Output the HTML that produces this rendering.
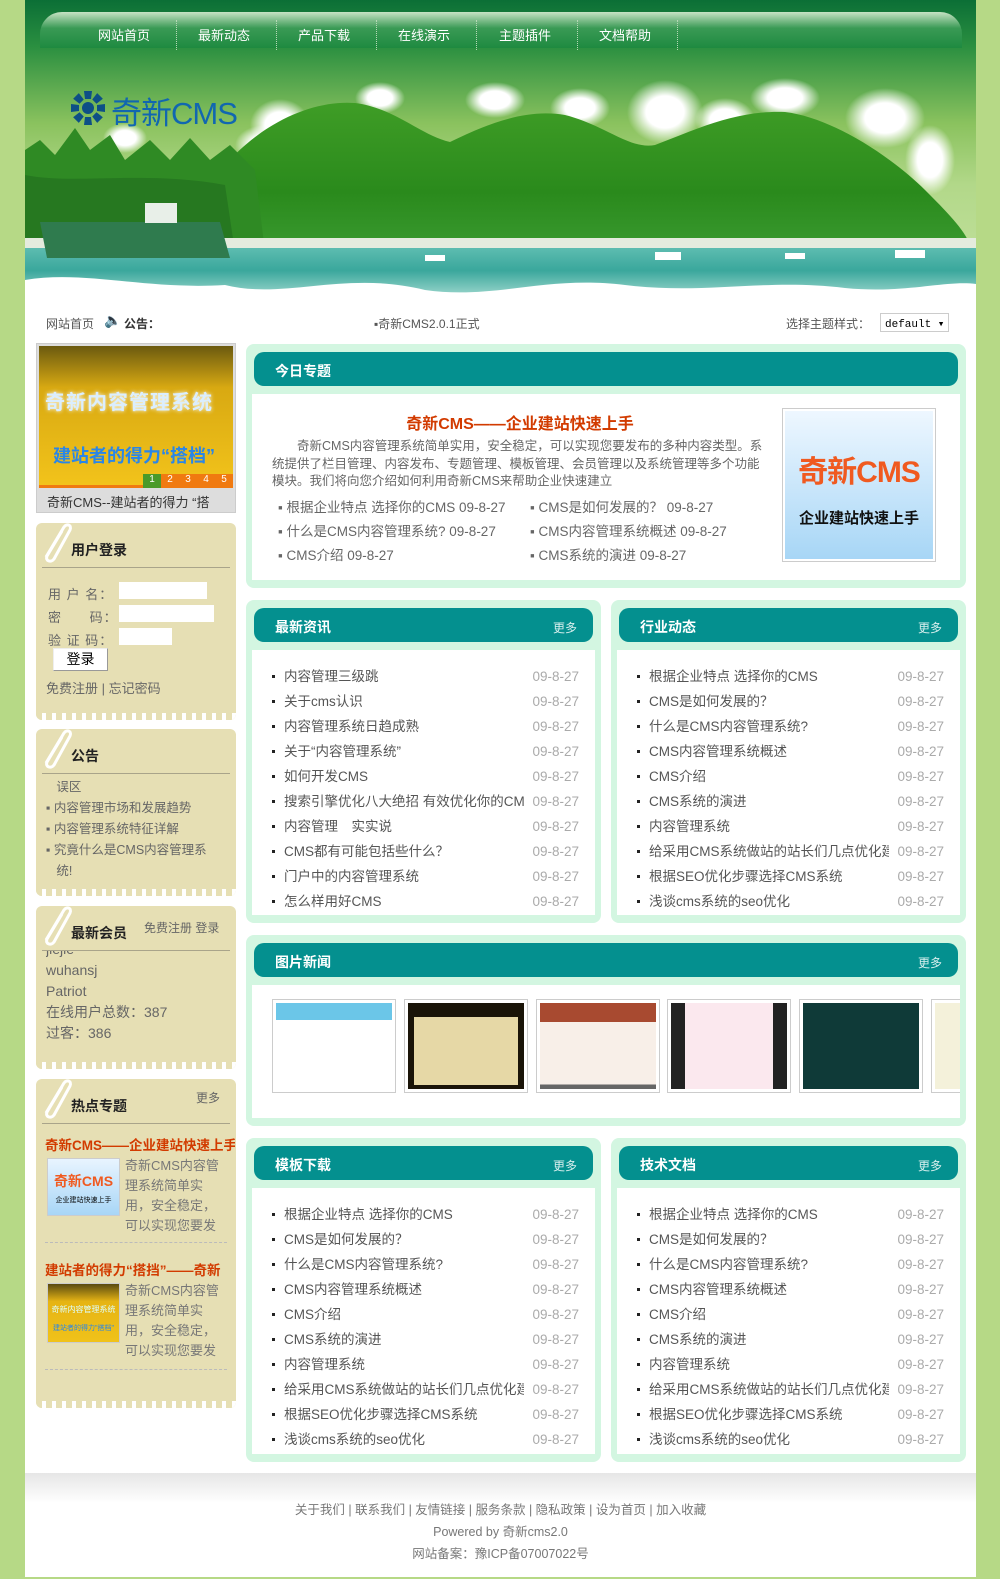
<!DOCTYPE html>
<html><head><meta charset="utf-8">
<style>
*{margin:0;padding:0;box-sizing:border-box}
body{width:1000px;height:1579px;background:#b6d986;font-family:"Liberation Sans","Noto Sans CJK SC",sans-serif;font-size:13px;color:#555;position:relative;overflow:hidden}
.abs{position:absolute}
#wrap{position:absolute;left:25px;top:0;width:951px;height:1577px;background:#fff}
.nav{position:absolute;left:15px;top:12px;width:922px;height:36px;border-radius:22px 22px 0 0;background:linear-gradient(#c7e3c4,#3a9a55 45%,#1e8a40)}
.nav span{position:absolute;top:13px;color:#fff;font-size:13px}
.nav i{position:absolute;top:8px;height:30px;border-left:1px dotted #b5d9b5}
.panel{position:absolute;background:#d3f6e1;border-radius:8px}
.phd{position:absolute;left:8px;right:8px;top:8px;height:34px;background:#04908f;border-radius:10px}
.phd b{position:absolute;left:21px;top:9px;color:#fff;font-size:14px}
.phd em{position:absolute;right:16px;top:11px;color:#d8efee;font-size:12px;font-style:normal}
.pbd{position:absolute;left:6px;right:6px;top:50px;bottom:8px;background:#fff}
.list{position:absolute;left:12px;right:16px;top:14px}
.list div{height:25px;line-height:25px;position:relative;padding-left:20px;font-size:13.5px;color:#555;white-space:nowrap;overflow:hidden}
.list div:before{content:"";position:absolute;left:8px;top:11px;width:3px;height:3px;background:#222}
.list div span{position:absolute;right:0;top:0;background:#fff;color:#aaa;padding-left:8px}
.side{position:absolute;left:36px;width:200px;background:#e6dfb4;border-radius:6px;overflow:hidden}
.side:after{content:"";position:absolute;left:0;right:0;bottom:0;height:7px;background:repeating-linear-gradient(90deg,#e6dfb4 0 6px,#fff 6px 10px);}
.side .t{position:absolute;left:35px;top:17px;font-size:14px;font-weight:bold;color:#222}
.side .hr{position:absolute;left:6px;right:6px;top:44px;border-top:1px solid #a9a48a}
.clip{position:absolute;left:4px;top:0}
</style></head><body>
<div id="wrap">
<svg class="abs" style="left:0;top:0" width="951" height="308" viewBox="0 0 951 308">
<defs>
<linearGradient id="sky" x1="0" y1="0" x2="0" y2="1"><stop offset="0" stop-color="#0b6f36"/><stop offset="0.15" stop-color="#2a8f40"/><stop offset="0.4" stop-color="#8ac25e"/><stop offset="0.6" stop-color="#b2d889"/><stop offset="1" stop-color="#c8e4a4"/></linearGradient>
<linearGradient id="hill" x1="0" y1="0" x2="0" y2="1"><stop offset="0" stop-color="#3f9d26"/><stop offset="0.6" stop-color="#2a8a1c"/><stop offset="1" stop-color="#3a9a30"/></linearGradient>
<linearGradient id="wat" x1="0" y1="0" x2="0" y2="1"><stop offset="0" stop-color="#5dbcb0"/><stop offset="0.5" stop-color="#3aa79c"/><stop offset="1" stop-color="#8fd0c6"/></linearGradient>
<radialGradient id="cl"><stop offset="0.5" stop-color="#fff"/><stop offset="1" stop-color="#fff" stop-opacity="0"/></radialGradient>
</defs>
<rect width="951" height="308" fill="url(#sky)"/>
<g fill="url(#cl)">
<ellipse cx="255" cy="125" rx="30" ry="26"/><ellipse cx="240" cy="145" rx="30" ry="20"/><ellipse cx="355" cy="98" rx="25" ry="16"/><ellipse cx="470" cy="100" rx="30" ry="18"/><ellipse cx="555" cy="108" rx="30" ry="20"/><ellipse cx="640" cy="112" rx="38" ry="32"/><ellipse cx="700" cy="120" rx="30" ry="22"/><ellipse cx="760" cy="98" rx="35" ry="20"/><ellipse cx="860" cy="118" rx="40" ry="30"/><ellipse cx="905" cy="160" rx="25" ry="35"/><ellipse cx="100" cy="138" rx="22" ry="15"/>
</g>
<path d="M190 250 L200 165 C240 120 290 100 330 103 C370 108 395 135 425 142 C460 125 500 108 540 115 C580 125 605 150 630 145 C670 130 710 110 760 112 C810 118 870 160 900 190 C920 210 940 230 945 245 L945 252 L190 252 Z" fill="url(#hill)"/>
<path d="M0 150 L15 140 L30 155 L50 128 L65 150 L85 135 L100 160 L125 140 L145 160 L165 138 L185 160 L205 145 L230 170 L240 252 L0 252 Z" fill="#2f8a24"/>
<path d="M0 175 C50 185 120 170 200 185 L210 252 L0 252Z" fill="#216d1e" opacity="0.6"/>
<rect x="0" y="238" width="951" height="12" fill="#e4ebde"/>
<rect x="0" y="248" width="951" height="45" fill="url(#wat)"/>
<path d="M0 280 C60 270 120 290 200 285 C260 300 320 270 400 290 C470 300 520 275 600 285 C680 295 740 278 820 288 C880 294 920 280 951 284 L951 308 L0 308Z" fill="#fff"/>
<path d="M15 222 L195 222 L205 258 L22 258 Z" fill="#2f7b4e"/><rect x="120" y="203" width="32" height="20" fill="#e8efe8"/>
<g fill="#fff"><rect x="400" y="255" width="20" height="6"/><rect x="630" y="252" width="26" height="8"/><rect x="760" y="253" width="20" height="6"/><rect x="870" y="250" width="30" height="8"/></g>
</svg>
<div class="nav">
<span style="left:58px">网站首页</span><i style="left:136px"></i>
<span style="left:158px">最新动态</span><i style="left:236px"></i>
<span style="left:258px">产品下载</span><i style="left:336px"></i>
<span style="left:358px">在线演示</span><i style="left:436px"></i>
<span style="left:459px">主题插件</span><i style="left:537px"></i>
<span style="left:559px">文档帮助</span><i style="left:637px"></i>
</div>
<svg class="abs" style="left:44px;top:89px" width="38" height="38" viewBox="0 0 38 38"><g fill="#0d4f86" transform="translate(19 19)"><circle r="6"/><path id="s" d="M-4 -17 L4 -17 L3 -9 L-3 -9Z"/><use href="#s" transform="rotate(45)"/><use href="#s" transform="rotate(90)"/><use href="#s" transform="rotate(135)"/><use href="#s" transform="rotate(180)"/><use href="#s" transform="rotate(225)"/><use href="#s" transform="rotate(270)"/><use href="#s" transform="rotate(315)"/></g></svg>
<div class="abs" style="left:86px;top:88px;font-size:31px;color:#1167b0;letter-spacing:-1px">奇新CMS</div>
<div class="abs" style="left:21px;top:315px;font-size:12px;color:#555">网站首页</div>
<div class="abs" style="left:79px;top:312px;font-size:14px;color:#c9a000">🔈</div>
<div class="abs" style="left:99px;top:315px;font-size:12px;color:#333;font-weight:bold">公告：</div>
<div class="abs" style="left:349px;top:315px;font-size:12px;color:#555">▪奇新CMS2.0.1正式</div>
<div class="abs" style="left:761px;top:315px;font-size:12px;color:#555">选择主题样式：</div>
<div class="abs" style="left:855px;top:313px;width:69px;height:19px;border:1px solid #ccc;font-family:'Liberation Mono',monospace;font-size:11px;color:#000;padding:3px 0 0 4px">default ▾</div>

<div class="abs" style="left:0;top:1473px;width:951px;height:30px;background:linear-gradient(#e6e6e6,#fff)"></div>
<div class="abs" style="left:0;top:1499px;width:951px;text-align:center;font-size:12.5px;color:#777;line-height:22px">关于我们 | 联系我们 | 友情链接 | 服务条款 | 隐私政策 | 设为首页 | 加入收藏<br>Powered by 奇新cms2.0<br>网站备案：豫ICP备07007022号</div>
</div>

<!-- slideshow -->
<div class="abs" style="left:36px;top:343px;width:200px;height:170px;background:#ddd;border:1px solid #ccc">
<div class="abs" style="left:2px;top:2px;width:194px;height:142px;background:linear-gradient(#6b5a10,#d8a912 30%,#f2c31b);border-bottom:3px solid #f07a10"></div>
<div class="abs" style="left:8px;top:42px;font-size:20px;color:#dbeefe;font-weight:bold;letter-spacing:1px;white-space:nowrap;text-shadow:0 0 4px #fff">奇新内容管理系统</div>
<div class="abs" style="left:16px;top:98px;font-size:18px;color:#2a86e8;font-weight:bold;white-space:nowrap">建站者的得力“搭档”</div>
<div class="abs" style="left:106px;top:130px;width:90px;height:14px;background:#f07a10;font-size:10px;color:#fff;display:flex"><span style="width:18px;background:#4a9a2a;text-align:center">1</span><span style="width:18px;text-align:center">2</span><span style="width:18px;text-align:center">3</span><span style="width:18px;text-align:center">4</span><span style="width:18px;text-align:center">5</span></div>
<div class="abs" style="left:10px;top:148px;font-size:13px;color:#333;white-space:nowrap;width:185px;overflow:hidden">奇新CMS--建站者的得力 “搭</div>
</div>

<svg width="0" height="0" style="position:absolute"><defs><g id="clip"><path d="M6 34 L24 4 C27 0 32 2 30 7 L14 36 C11 40 5 38 7 33 L22 8" fill="none" stroke="#fff" stroke-width="3"/></g></defs></svg>

<div class="side" style="top:523px;height:197px">
<svg class="clip" width="34" height="42"><use href="#clip"/></svg>
<div class="t">用户登录</div><div class="hr"></div>
<div class="abs" style="left:12px;top:60px;font-size:13px;color:#666;line-height:23px;letter-spacing:1px">用 户 名：<br>密&nbsp;&nbsp;&nbsp;&nbsp;&nbsp;&nbsp;码：<br>验 证 码：</div>
<div class="abs" style="left:83px;top:59px;width:88px;height:17px;background:#fff"></div>
<div class="abs" style="left:83px;top:82px;width:95px;height:17px;background:#fff"></div>
<div class="abs" style="left:83px;top:105px;width:53px;height:17px;background:#fff"></div>
<div class="abs" style="left:17px;top:125px;width:55px;height:23px;background:#fff;border:1px solid #999;border-top-color:#eee;border-left-color:#eee;text-align:center;font-size:14px;color:#000;line-height:21px">登录</div>
<div class="abs" style="left:10px;top:155px;font-size:13px;color:#666">免费注册 | 忘记密码</div>
</div>

<div class="side" style="top:729px;height:167px">
<svg class="clip" width="34" height="42"><use href="#clip"/></svg>
<div class="t">公告</div><div class="hr"></div>
<div class="abs" style="left:10px;top:48px;font-size:12.5px;color:#666;line-height:21px;width:185px">&nbsp;&nbsp;&nbsp;误区<br>▪ 内容管理市场和发展趋势<br>▪ 内容管理系统特征详解<br>▪ 究竟什么是CMS内容管理系<br>&nbsp;&nbsp;&nbsp;统!</div>
</div>

<div class="side" style="top:906px;height:163px">
<svg class="clip" width="34" height="42"><use href="#clip"/></svg>
<div class="t">最新会员</div><div class="abs" style="left:108px;top:13px;font-size:12px;color:#666">免费注册 登录</div><div class="hr"></div>
<div class="abs" style="left:10px;top:45px;height:100px;overflow:hidden;font-size:14px;color:#666;line-height:21px"><div style="margin-top:-12px">jiejie<br>wuhansj<br>Patriot<br>在线用户总数：387<br>过客：386</div></div>
</div>

<div class="side" style="top:1079px;height:329px">
<svg class="clip" width="34" height="42"><use href="#clip"/></svg>
<div class="t">热点专题</div><div class="abs" style="right:16px;top:10px;font-size:12px;color:#666">更多</div><div class="hr"></div>
<div class="abs" style="left:9px;top:55px;width:190px;white-space:nowrap;overflow:hidden;font-size:13.5px;color:#d23b00;font-weight:bold">奇新CMS——企业建站快速上手</div>
<div class="abs" style="left:11px;top:79px;width:73px;height:58px;border:1px solid #ccc;background:linear-gradient(#e8f4ff,#a8d6f6);text-align:center"><div style="color:#f05a20;font-size:14px;margin-top:12px;font-weight:bold">奇新CMS</div><div style="font-size:7px;color:#000;margin-top:4px;white-space:nowrap">企业建站快速上手</div></div>
<div class="abs" style="left:89px;top:77px;width:100px;font-size:13px;color:#777;line-height:20px">奇新CMS内容管理系统简单实用，安全稳定，可以实现您要发</div>
<div class="abs" style="left:9px;top:163px;width:182px;border-top:1px dashed #bbb"></div>
<div class="abs" style="left:9px;top:180px;width:190px;white-space:nowrap;overflow:hidden;font-size:13.5px;color:#d23b00;font-weight:bold">建站者的得力“搭挡”——奇新</div>
<div class="abs" style="left:11px;top:204px;width:73px;height:60px;border:1px solid #ccc;background:linear-gradient(#5a4a10,#e6b414 30%,#f0c21a);text-align:center"><div style="color:#dff;font-size:8px;margin-top:20px;white-space:nowrap">奇新内容管理系统</div><div style="font-size:7px;color:#2a86e8;margin-top:8px;white-space:nowrap">建站者的得力"搭档"</div></div>
<div class="abs" style="left:89px;top:202px;width:100px;font-size:13px;color:#777;line-height:20px">奇新CMS内容管理系统简单实用，安全稳定，可以实现您要发</div>
<div class="abs" style="left:9px;top:290px;width:182px;border-top:1px dashed #bbb"></div>
</div>

<!-- today -->
<div class="panel" style="left:246px;top:344px;width:720px;height:244px">
<div class="phd"><b>今日专题</b></div>
<div class="pbd">
<div class="abs" style="left:0;width:536px;top:16px;text-align:center;font-size:16px;color:#d23b00;font-weight:bold">奇新CMS——企业建站快速上手</div>
<div class="abs" style="left:20px;top:44px;width:496px;font-size:12.5px;color:#666;line-height:17.5px;text-indent:2em">奇新CMS内容管理系统简单实用，安全稳定，可以实现您要发布的多种内容类型。系统提供了栏目管理、内容发布、专题管理、模板管理、会员管理以及系统管理等多个功能模块。我们将向您介绍如何利用奇新CMS来帮助企业快速建立</div>
<div class="abs" style="left:26px;top:102px;font-size:13.5px;color:#666;line-height:24px;white-space:nowrap">▪ 根据企业特点 选择你的CMS 09-8-27<br>▪ 什么是CMS内容管理系统? 09-8-27<br>▪ CMS介绍 09-8-27</div>
<div class="abs" style="left:278px;top:102px;font-size:13.5px;color:#666;line-height:24px;white-space:nowrap">▪ CMS是如何发展的？ 09-8-27<br>▪ CMS内容管理系统概述 09-8-27<br>▪ CMS系统的演进 09-8-27</div>
<div class="abs" style="left:530px;top:14px;width:154px;height:154px;border:1px solid #ccc;padding:2px"><div style="width:100%;height:100%;background:linear-gradient(#eef7ff,#a7d6f6);text-align:center"><div style="color:#f05a20;font-size:30px;padding-top:36px;font-weight:bold;letter-spacing:-1px">奇新CMS</div><div style="color:#111;font-size:15px;font-weight:bold;margin-top:16px">企业建站快速上手</div></div></div>
</div></div>

<div class="panel" style="left:246px;top:600px;width:355px;height:323px">
<div class="phd"><b>最新资讯</b><em>更多</em></div>
<div class="pbd"><div class="list">
<div>内容管理三级跳<span>09-8-27</span></div><div>关于cms认识<span>09-8-27</span></div><div>内容管理系统日趋成熟<span>09-8-27</span></div><div>关于“内容管理系统”<span>09-8-27</span></div><div>如何开发CMS<span>09-8-27</span></div><div>搜索引擎优化八大绝招 有效优化你的CMS<span>09-8-27</span></div><div>内容管理　实实说<span>09-8-27</span></div><div>CMS都有可能包括些什么？<span>09-8-27</span></div><div>门户中的内容管理系统<span>09-8-27</span></div><div>怎么样用好CMS<span>09-8-27</span></div>
</div></div></div>

<div class="panel" style="left:611px;top:600px;width:355px;height:323px">
<div class="phd"><b>行业动态</b><em>更多</em></div>
<div class="pbd"><div class="list">
<div>根据企业特点 选择你的CMS<span>09-8-27</span></div><div>CMS是如何发展的？<span>09-8-27</span></div><div>什么是CMS内容管理系统?<span>09-8-27</span></div><div>CMS内容管理系统概述<span>09-8-27</span></div><div>CMS介绍<span>09-8-27</span></div><div>CMS系统的演进<span>09-8-27</span></div><div>内容管理系统<span>09-8-27</span></div><div>给采用CMS系统做站的站长们几点优化建议<span>09-8-27</span></div><div>根据SEO优化步骤选择CMS系统<span>09-8-27</span></div><div>浅谈cms系统的seo优化<span>09-8-27</span></div>
</div></div></div>

<div class="panel" style="left:246px;top:935px;width:720px;height:191px">
<div class="phd"><b>图片新闻</b><em>更多</em></div>
<div class="pbd" style="overflow:hidden">
<div class="abs" style="left:20px;top:14px;width:124px;height:94px;border:1px solid #ccc;padding:3px"><div style="height:100%;background:linear-gradient(#6bc6e8 0 20%,#fff 20%);"></div></div>
<div class="abs" style="left:152px;top:14px;width:124px;height:94px;border:1px solid #ccc;padding:3px"><div style="height:100%;background:#1a1408;padding:14px 6px 4px"><div style="height:100%;background:#e6d8a6"></div></div></div>
<div class="abs" style="left:284px;top:14px;width:124px;height:94px;border:1px solid #ccc;padding:3px"><div style="height:100%;background:linear-gradient(#a84a30 0 22%,#f8efe8 22% 95%,#666 95%)"></div></div>
<div class="abs" style="left:415px;top:14px;width:124px;height:94px;border:1px solid #ccc;padding:3px"><div style="height:100%;background:linear-gradient(90deg,#222 0 12%,#fbe8ee 12% 88%,#222 88%)"></div></div>
<div class="abs" style="left:547px;top:14px;width:124px;height:94px;border:1px solid #ccc;padding:3px"><div style="height:100%;background:#0f3a38"></div></div>
<div class="abs" style="left:679px;top:14px;width:124px;height:94px;border:1px solid #ccc;padding:3px"><div style="height:100%;background:#f4f1da"></div></div>
</div></div>

<div class="panel" style="left:246px;top:1138px;width:355px;height:324px">
<div class="phd"><b>模板下载</b><em>更多</em></div>
<div class="pbd"><div class="list">
<div>根据企业特点 选择你的CMS<span>09-8-27</span></div><div>CMS是如何发展的？<span>09-8-27</span></div><div>什么是CMS内容管理系统?<span>09-8-27</span></div><div>CMS内容管理系统概述<span>09-8-27</span></div><div>CMS介绍<span>09-8-27</span></div><div>CMS系统的演进<span>09-8-27</span></div><div>内容管理系统<span>09-8-27</span></div><div>给采用CMS系统做站的站长们几点优化建议<span>09-8-27</span></div><div>根据SEO优化步骤选择CMS系统<span>09-8-27</span></div><div>浅谈cms系统的seo优化<span>09-8-27</span></div>
</div></div></div>

<div class="panel" style="left:611px;top:1138px;width:355px;height:324px">
<div class="phd"><b>技术文档</b><em>更多</em></div>
<div class="pbd"><div class="list">
<div>根据企业特点 选择你的CMS<span>09-8-27</span></div><div>CMS是如何发展的？<span>09-8-27</span></div><div>什么是CMS内容管理系统?<span>09-8-27</span></div><div>CMS内容管理系统概述<span>09-8-27</span></div><div>CMS介绍<span>09-8-27</span></div><div>CMS系统的演进<span>09-8-27</span></div><div>内容管理系统<span>09-8-27</span></div><div>给采用CMS系统做站的站长们几点优化建议<span>09-8-27</span></div><div>根据SEO优化步骤选择CMS系统<span>09-8-27</span></div><div>浅谈cms系统的seo优化<span>09-8-27</span></div>
</div></div></div>
</body></html>
